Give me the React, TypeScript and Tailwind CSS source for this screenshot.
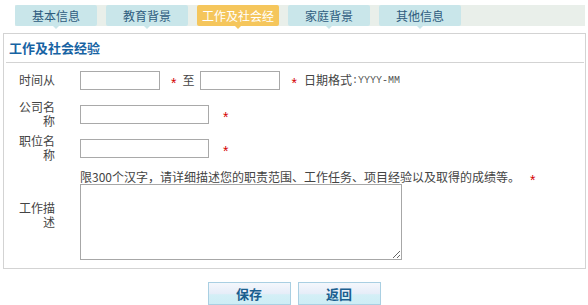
import React from "react";

const tabs = ["基本信息", "教育背景", "工作及社会经", "家庭背景", "其他信息"];

const Star = () => (
    <span className="relative top-[3px] font-['Liberation_Sans',sans-serif] text-[14px] leading-none text-[#d40000]">*</span>
);

const Label: React.FC<{ text: string }> = ({ text }) => (
    <div className="w-[76px] shrink-0 pl-[14px] pr-[25px] text-right leading-[14px] text-[#444]">{text}</div>
);

const Field = ({ w }: { w: string }) => (
    <input className={`h-[19px] ${w} border border-[#a9a9a9] bg-white outline-none`} />
);

export default function App() {
    return (
        <div className="w-[588px] h-[305px] bg-white font-['Noto_Sans_CJK_SC',sans-serif] text-[12px] text-[#444]">
            {/* tab strip */}
            <div className="ml-[15px] mt-[5px] mr-[3px] flex h-[21px] gap-[9px] bg-[#e9efea]">
                {tabs.map((t, i) => {
                    const active = i === 2;
                    return (
                        <div
                            key={t}
                            className={`relative flex w-[82px] items-center justify-center rounded-[2px] ${
                                active ? "bg-[#f5c65c] text-white" : "bg-[#c9e6ea] text-[#2e5c7e]"
                            }`}
                        >
                            {t}
                            <span
                                className={`absolute left-1/2 top-full -ml-[3px] h-0 w-0 border-x-[3px] border-t-[3px] border-x-transparent ${
                                    active ? "border-t-[#f5c65c]" : "border-t-[#c9e6ea]"
                                }`}
                            />
                        </div>
                    );
                })}
            </div>

            {/* panel */}
            <div className="ml-[3px] mt-[7px] h-[236px] w-[583px] border border-[#d3d3d3]">
                <div className="ml-[2px] mr-[1px] flex h-[29px] items-center border-b border-[#d3d3d3] pl-[3px] text-[13px] font-bold text-[#1763a3]">
                    工作及社会经验
                </div>

                <div className="flex h-[34px] items-center">
                    <Label text="时间从" />
                    <Field w="w-[80px]" />
                    <span className="ml-[11px]">
                        <Star />
                    </span>
                    <span className="ml-[6px]">至</span>
                    <span className="ml-[6px] flex">
                        <Field w="w-[80px]" />
                    </span>
                    <span className="ml-[11px]">
                        <Star />
                    </span>
                    <span className="ml-[7px]">日期格式</span>
                    <span className="font-['Liberation_Mono',monospace] text-[10px] text-[#555]">:YYYY-MM</span>
                </div>

                <div className="flex h-[34px] items-center">
                    <Label text="公司名称" />
                    <Field w="w-[129px]" />
                    <span className="ml-[14px]">
                        <Star />
                    </span>
                </div>

                <div className="flex h-[34px] items-center">
                    <Label text="职位名称" />
                    <Field w="w-[129px]" />
                    <span className="ml-[14px]">
                        <Star />
                    </span>
                </div>

                <div className="mt-[5px] flex items-center">
                    <Label text="工作描述" />
                    <div className="flex flex-col">
                        <div className="flex h-[14px] items-center leading-[14px]">
                            <span>限300个汉字，请详细描述您的职责范围、工作任务、项目经验以及取得的成绩等。</span>
                            <span className="ml-[10px]">
                                <Star />
                            </span>
                        </div>
                        <textarea className="block h-[76px] w-[322px] border border-[#a7a7a7] bg-white outline-none" />
                    </div>
                </div>
            </div>

            {/* buttons */}
            <div className="mt-[13px] flex justify-center gap-[7px]">
                {["保存", "返回"].map((b) => (
                    <button
                        key={b}
                        className="h-[23px] w-[83px] border border-[#a9cfe2] bg-[linear-gradient(to_bottom,#f4f7fc_0%,#e6edf8_50%,#d4eff6_56%,#cdedf5_100%)] text-[13px] font-bold text-[#1a5e8f]"
                    >
                        {b}
                    </button>
                ))}
            </div>
        </div>
    );
}
